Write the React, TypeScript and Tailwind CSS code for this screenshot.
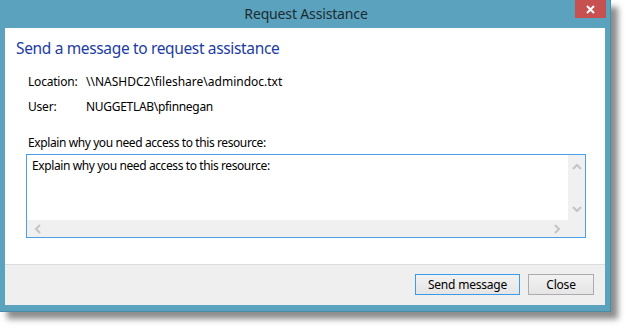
import React from "react";

const ui = { fontFamily: '"Noto Sans", "Open Sans", sans-serif' };

const Chevron = ({ dir }: { dir: "up" | "down" | "left" | "right" }) => {
  const d = {
    up: "M1 6 L5 2 L9 6",
    down: "M1 2 L5 6 L9 2",
    left: "M6 1 L2 5 L6 9",
    right: "M2 1 L6 5 L2 9",
  }[dir];
  const vert = dir === "up" || dir === "down";
  return (
    <svg width={vert ? 10 : 8} height={vert ? 8 : 10} viewBox={vert ? "0 0 10 8" : "0 0 8 10"}>
      <path d={d} fill="none" stroke="#c4c4c4" strokeWidth="2" />
    </svg>
  );
};

export default function App() {
  return (
    <div className="w-[626px] h-[328px] bg-white overflow-hidden" style={ui}>
      <div className="w-[611px] h-[312px] bg-[#5aa2bd] border-b border-r border-[#4a8ca6] shadow-[7px_7px_6px_rgba(0,0,0,0.45)] flex flex-col">
        {/* title bar */}
        <div className="h-[28px] relative flex items-center justify-center">
          <span className="text-[14px] tracking-[-0.15px] text-[#1d2b31] leading-none -mt-[1px] pl-[2px]">Request Assistance</span>
          <div className="absolute right-[4px] top-0 w-[31px] h-[18px] bg-[#c75050] flex items-center justify-center">
            <svg width="9" height="9" viewBox="0 0 9 9">
              <path d="M1 1 L8 8 M8 1 L1 8" stroke="#fff" strokeWidth="2" />
            </svg>
          </div>
        </div>

        {/* body */}
        <div className="mx-[5px] h-[277px] bg-white flex flex-col">
          <div className="h-[236px] flex flex-col text-[12px] text-black">
            <div className="mt-[10px] ml-[11px] h-[22px] flex items-center text-[15.5px] tracking-[-0.35px] text-[#1c3ca3]">
              Send a message to request assistance
            </div>
            <div className="mt-[12px] ml-[23px] h-[20px] flex items-center">
              <span className="w-[58px] tracking-[-0.2px]">Location:</span>
              <span>\\NASHDC2\fileshare\admindoc.txt</span>
            </div>
            <div className="mt-[5px] ml-[23px] h-[20px] flex items-center">
              <span className="w-[58px] tracking-[-0.2px]">User:</span>
              <span className="tracking-[-0.3px]">NUGGETLAB\pfinnegan</span>
            </div>
            <div className="mt-[16px] ml-[23px] h-[20px] flex items-center tracking-[-0.4px]">
              Explain why you need access to this resource:
            </div>
            <div className="mt-[1px] ml-[21px] w-[560px] h-[84px] border border-[#4a9fe8] flex">
              <div className="flex-1 flex flex-col">
                <div className="flex-1 pl-[5px] pt-[2px] tracking-[-0.4px]">Explain why you need access to this resource:</div>
                <div className="h-[17px] bg-[#f0f0f0] flex items-center justify-between px-[7px]">
                  <Chevron dir="left" />
                  <Chevron dir="right" />
                </div>
              </div>
              <div className="w-[17px] bg-[#f0f0f0] flex flex-col items-center justify-between pt-[8px] pb-[24px]">
                <Chevron dir="up" />
                <Chevron dir="down" />
              </div>
            </div>
          </div>
          <div className="h-[41px] bg-[#efefef] border-t border-[#dcdcdc] flex items-start justify-end pt-[9px] pr-[11px] gap-[8px] text-[12px] text-black tracking-[-0.2px]">
            <button className="w-[105px] h-[21px] border border-[#3c9be8] bg-gradient-to-b from-[#f2f2f2] to-[#e5e5e5] flex items-center justify-center">
              Send message
            </button>
            <button className="w-[66px] h-[21px] border border-[#acacac] bg-gradient-to-b from-[#f2f2f2] to-[#e5e5e5] flex items-center justify-center">
              Close
            </button>
          </div>
        </div>
      </div>
    </div>
  );
}
